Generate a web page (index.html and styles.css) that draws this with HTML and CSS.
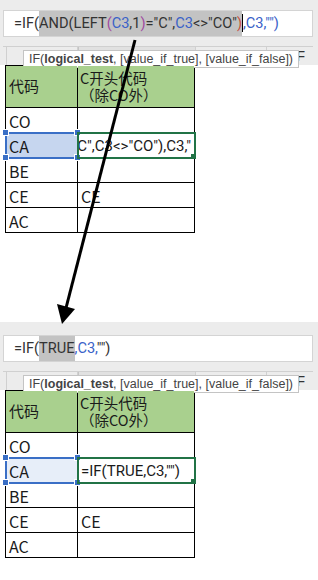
FILE: index.html
```html
<!DOCTYPE html>
<html lang="zh-CN">
  <head>
    <meta charset="UTF-8" />
    <meta name="viewport" content="width=device-width, initial-scale=1.0" />
    <title>IF AND LEFT 公式演示</title>
    <link rel="stylesheet" href="styles.css">
  </head>
  <body>
    <div class="page">
      <!-- before: full formula with AND(...) selected -->
      <section class="shot">
        <div class="bar">
          <div class="fx">=IF(<span class="hl">AND<span class="p-and">(</span>LEFT<span class="p-left">(</span><span class="ref">C3</span>,1<span class="p-left">)</span>="C",<span class="ref">C3</span>&lt;&gt;"CO"<span class="p-end">)</span></span><span class="caret"></span><span class="ref">,C3,"")</span></div>
          <div class="colhead">
            <span class="ch ch-corner"></span>
            <span class="ch ch-a"></span>
            <span class="ch ch-c sel"></span>
            <span class="ch ch-d"></span>
            <span class="ch ch-f">F</span>
          </div>
        </div>
        <div class="tip">IF(<b>logical_test</b>, [value_if_true], [value_if_false])</div>
        <table class="sheet">
          <colgroup><col class="col-a"><col class="col-c"></colgroup>
          <tr class="head">
            <td>代码</td>
            <td class="cn"><div>C开头代码</div><div>（除CO外）</div></td>
          </tr>
          <tr><td>CO</td><td></td></tr>
          <tr>
            <td class="picked">CA<i class="h tl"></i><i class="h tr"></i><i class="h bl"></i><i class="h br"></i></td>
            <td class="editing scrolled"><span class="edit-text">"C",C3&lt;&gt;"CO"),C3,"</span></td>
          </tr>
          <tr><td>BE</td><td></td></tr>
          <tr><td>CE</td><td>CE</td></tr>
          <tr><td>AC</td><td></td></tr>
        </table>
      </section>

      <!-- after: AND(...) evaluated to TRUE -->
      <section class="shot shot-after">
        <div class="bar">
          <div class="fx">=IF(<span class="hl">TRUE</span><span class="ref">,C3,</span>"")</div>
          <div class="colhead">
            <span class="ch ch-corner"></span>
            <span class="ch ch-a"></span>
            <span class="ch ch-c sel"></span>
            <span class="ch ch-d"></span>
            <span class="ch ch-f">F</span>
          </div>
        </div>
        <div class="tip">IF(<b>logical_test</b>, [value_if_true], [value_if_false])</div>
        <table class="sheet">
          <colgroup><col class="col-a"><col class="col-c"></colgroup>
          <tr class="head">
            <td>代码</td>
            <td class="cn"><div>C开头代码</div><div>（除CO外）</div></td>
          </tr>
          <tr><td>CO</td><td></td></tr>
          <tr>
            <td class="picked light">CA<i class="h tl"></i><i class="h tr"></i><i class="h bl"></i><i class="h br"></i></td>
            <td class="editing"><span class="edit-text">=IF(TRUE,C3,"")</span></td>
          </tr>
          <tr><td>BE</td><td></td></tr>
          <tr><td>CE</td><td>CE</td></tr>
          <tr><td>AC</td><td></td></tr>
        </table>
      </section>

      <svg class="arrow" width="318" height="580" viewBox="0 0 318 580">
        <line x1="135" y1="40" x2="66" y2="308" stroke="#000" stroke-width="3" />
        <polygon points="57,304 75,309 62,324" fill="#000" />
      </svg>
    </div>
  </body>
</html>
```

FILE: styles.css
```css
/* Page */
body {
  margin: 0;
  background: #fff;
  font-family: "Noto Sans CJK SC", sans-serif;
  color: #1a1a1a;
}

.page {
  position: relative;
  width: 318px;
  height: 580px;
  overflow: hidden;
}

/* One screenshot of the sheet */
.shot {
  position: relative;
}

.shot-after {
  margin-top: 89px;
}

/* Formula bar + column headers */
.bar {
  background: #ececec;
  padding: 10px 5px 0 3px;
}

.shot-after .bar {
  padding-top: 13px;
}

.fx {
  height: 27px;
  box-sizing: border-box;
  background: #fff;
  border: 1px solid #d4d4d4;
  padding-left: 10px;
  font-family: Roboto, "Liberation Sans", sans-serif;
  font-size: 14.6px;
  line-height: 24px;
  color: #333;
  white-space: nowrap;
  overflow: hidden;
}

.hl {
  background: #c3c3c3;
  padding: 3px 0 4px;
}

.ref {
  color: #3a62c8;
}

.p-left {
  color: #a04aa0;
}

.p-end {
  color: #c8503c;
}

.caret {
  display: inline-block;
  width: 1px;
  height: 18px;
  background: #000;
  vertical-align: -4px;
}

.colhead {
  display: flex;
  height: 18px;
  margin-top: 9px;
  border-top: 1px solid #d0d0d0;
}

.ch {
  border-right: 1px solid #d0d0d0;
  font-family: "Liberation Sans", sans-serif;
  font-size: 14px;
  line-height: 18px;
  color: #333;
}

.ch-corner {
  width: 3px;
}

.ch-a {
  width: 70px;
}

.ch-c {
  width: 116px;
}

.ch-d {
  width: 70px;
}

.ch-f {
  flex: 1;
  border-right: none;
  text-align: right;
  padding-right: 8px;
}

.sel {
  background: #e1e1e1;
  border-left: 1px solid #c4c4c4;
}

/* Function tooltip */
.tip {
  position: absolute;
  left: 23px;
  top: 50px;
  background: #fff;
  border: 1px solid #c4c4c4;
  padding: 0 5px;
  font-family: "Liberation Sans", sans-serif;
  font-size: 12.5px;
  line-height: 16px;
  color: #444;
  white-space: nowrap;
}

.shot-after .tip {
  top: 53px;
}

/* Sheet table */
.sheet {
  border-collapse: collapse;
  margin-left: 5px;
  table-layout: fixed;
  width: 189px;
}

.col-a {
  width: 72px;
}

.col-c {
  width: 117px;
}

.sheet td {
  position: relative;
  border: 1px solid #000;
  height: 23px;
  padding: 0 3px 1px;
  font-size: 16px;
  line-height: 20px;
  vertical-align: bottom;
  white-space: nowrap;
}

.head td {
  height: 37px;
  background: #a9d08e;
  font-size: 15px;
  vertical-align: middle;
}

.head .cn {
  font-size: 14.5px;
  line-height: 17px;
  padding-left: 2px;
  vertical-align: top;
  padding-top: 3px;
}

/* Selected A cell */
.picked {
  background: #c6d6ef;
  outline: 2px solid #3a6fc6;
  outline-offset: -1px;
}

.picked.light {
  background: #e7eef9;
}

.h {
  position: absolute;
  width: 5px;
  height: 5px;
  background: #3a6fc6;
  border: 1px solid #fff;
}

.tl { left: -4px; top: -4px; }
.tr { right: -4px; top: -4px; }
.bl { left: -4px; bottom: -4px; }
.br { right: -4px; bottom: -4px; }

/* Cell being edited */
.editing {
  outline: 2px solid #217346;
  outline-offset: -1px;
  overflow: hidden;
}

.editing::after {
  content: "";
  position: absolute;
  right: -3px;
  bottom: -3px;
  width: 5px;
  height: 5px;
  background: #217346;
  border: 1px solid #fff;
}

.edit-text {
  font-family: Roboto, "Liberation Sans", sans-serif;
  font-size: 15px;
}

.scrolled {
  text-align: right;
  direction: rtl;
}

.scrolled .edit-text {
  direction: ltr;
  unicode-bidi: bidi-override;
}

/* Arrow between the two shots */
.arrow {
  position: absolute;
  left: 0;
  top: 0;
  pointer-events: none;
}
```
